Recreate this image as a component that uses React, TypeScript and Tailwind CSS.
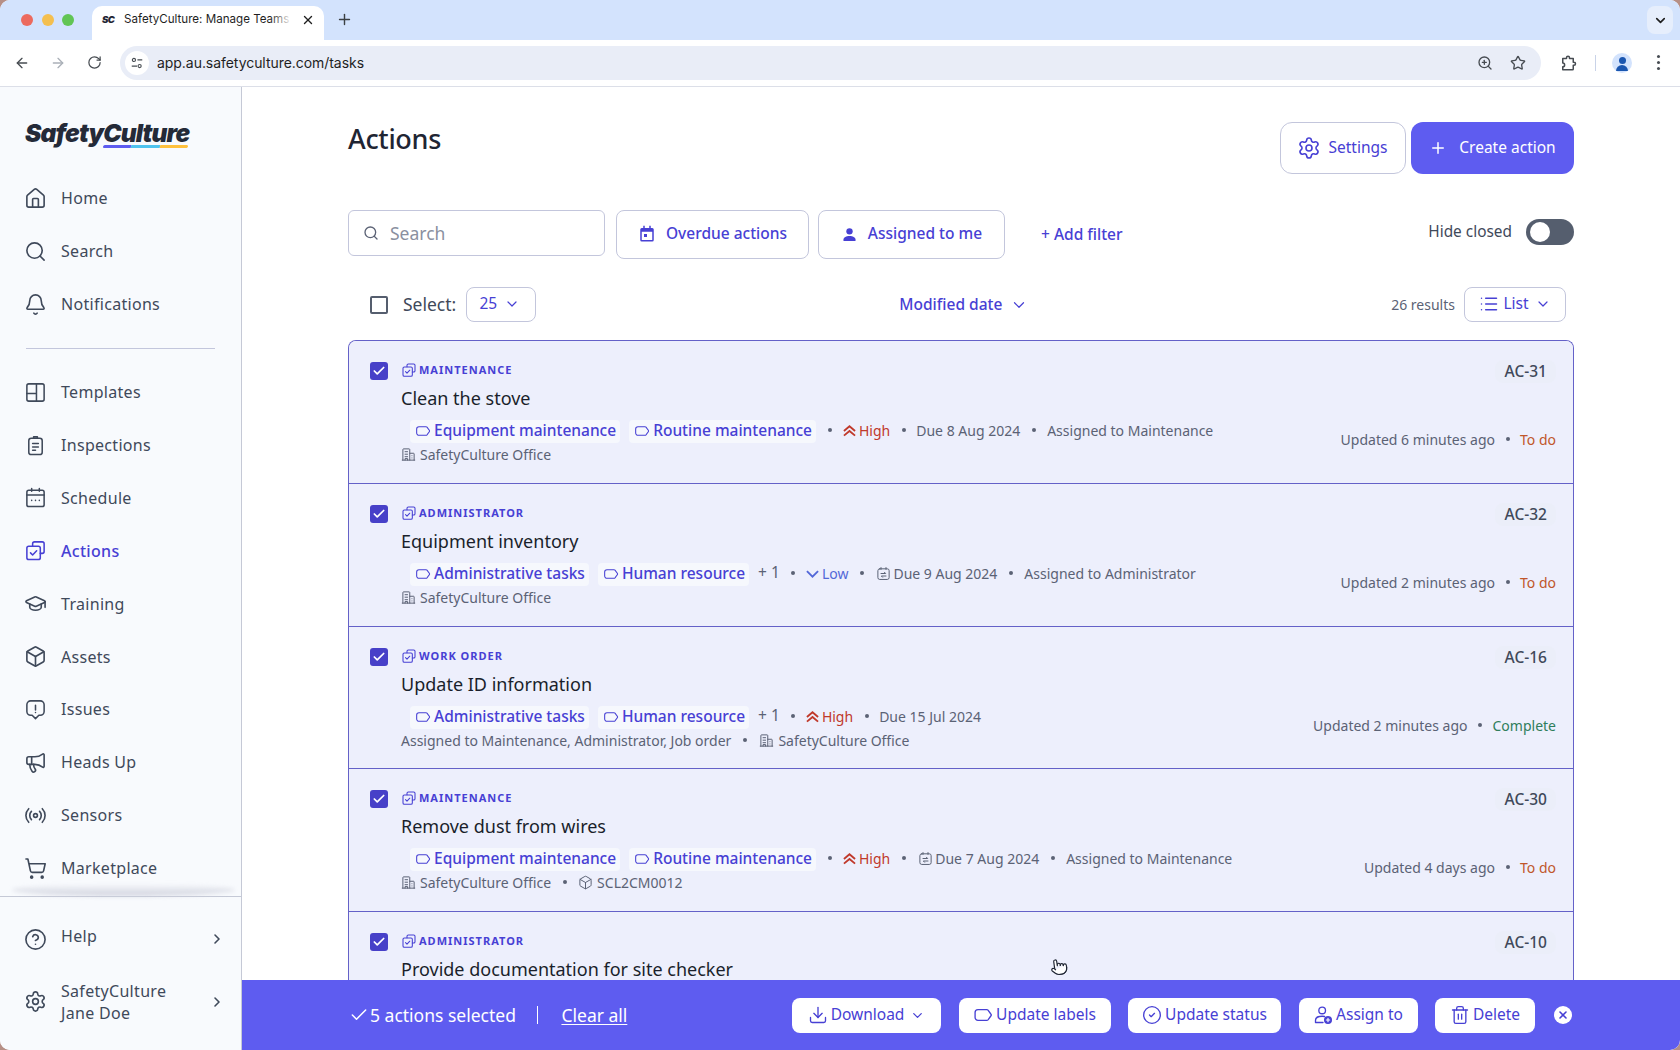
import React from "react";
import {
  ArrowLeft, ArrowRight, RotateCw, X, Plus, ChevronDown, ChevronRight, ZoomIn, Star, Search, House, Bell,
  GraduationCap, Box, Megaphone, Radio, ShoppingCart, CircleHelp, Settings, List, Download, CircleCheck,
  Trash2, Check, Pointer,
} from "lucide-react";

const S = ({ className, children }: { className?: string; children: React.ReactNode }) => (
  <svg viewBox="0 0 24 24" fill="none" stroke="currentColor" strokeWidth={1.6} strokeLinecap="round" strokeLinejoin="round" className={className}>
    {children}
  </svg>
);

const TemplatesIcon = ({ className }: { className?: string }) => (
  <S className={className}><rect x="3" y="3" width="18" height="18" rx="2" /><path d="M13 3v18M3 13h10" /></S>
);
const InspectionsIcon = ({ className }: { className?: string }) => (
  <S className={className}><rect x="5" y="4.5" width="14" height="17" rx="2.5" /><path d="M10 4.5V3h4v1.5M9 10h6M9 13.5h6M9 17h3" /></S>
);
const ScheduleIcon = ({ className }: { className?: string }) => (
  <S className={className}><rect x="3" y="4.5" width="18" height="17" rx="2" /><path d="M3 9.5h18M8 2.5v3M16 2.5v3M8 15h.01M12 15h.01M16 15h.01" /></S>
);
const ActionsIcon = ({ className }: { className?: string }) => (
  <S className={className}><path d="M9 7V5a2 2 0 0 1 2-2h8a2 2 0 0 1 2 2v8a2 2 0 0 1-2 2h-2" /><rect x="3" y="7.5" width="14" height="14" rx="2" /><path d="m6.8 14.5 2.2 2.2 4.2-4.4" /></S>
);
const IssuesIcon = ({ className }: { className?: string }) => (
  <S className={className}><path d="M7 3h10a4 4 0 0 1 4 4v7a4 4 0 0 1-4 4h-1.5L12 21.5 8.5 18H7a4 4 0 0 1-4-4V7a4 4 0 0 1 4-4z" /><path d="M12 7.5v5M12 15.2h.01" /></S>
);
const TagIcon = ({ className }: { className?: string }) => (
  <S className={className}><path d="M6 5.5h10.5a2 2 0 0 1 1.5.7l3.4 4.6a1.8 1.8 0 0 1 0 2.4L18 17.8a2 2 0 0 1-1.5.7H6a3.5 3.5 0 0 1-3.5-3.5V9A3.5 3.5 0 0 1 6 5.5z" /></S>
);
const BuildingIcon = ({ className }: { className?: string }) => (
  <S className={className}><path d="M3 21V4a1 1 0 0 1 1-1h9a1 1 0 0 1 1 1v17M14 10h6a1 1 0 0 1 1 1v10M2 21h20M6.5 7.5h4M6.5 11.5h4M6.5 15.5h4M6.5 21v-2.5h4V21M17.5 14v.01M17.5 17.5v.01" /></S>
);
const DueIcon = ({ className }: { className?: string }) => (
  <S className={className}><rect x="3" y="4.5" width="18" height="17" rx="3" /><path d="M8 2.5v3M16 2.5v3M8 12h7.5l-2-2M16 16H8.5l2 2" /></S>
);
const AssignIcon = ({ className }: { className?: string }) => (
  <S className={className}><circle cx="11" cy="6.500" r="4" /><path d="M3 21v-2.500c0-3 3.200-5 8-5 1 0 2 .1 2.800.3M3 21h9" /><circle cx="18" cy="18" r="4" fill="currentColor" /><path d="M18 16v4M16 18h4" stroke="#fff" strokeWidth={1.4} /></S>
);
const ExtensionIcon = ({ className }: { className?: string }) => (
  <svg viewBox="0 0 24 24" fill="none" stroke="currentColor" strokeWidth={2} strokeLinejoin="round" className={className}>
    <path d="M5 6h5V5a2 2 0 0 1 4 0v1h5v5h1a2 2 0 0 1 0 4h-1v5a1 1 0 0 1-1 1H5v-4c1.500 0 2.500-1 2.500-2.500S6.500 12 5 12z" />
  </svg>
);
const HighIcon = () => (
  <svg viewBox="0 0 14 14" className="w-[13px] h-[13px]" fill="none" stroke="currentColor" strokeWidth={2}>
    <path d="M1 7.500 7 2.500l6 5M1 12.500l6-5 6 5" />
  </svg>
);
const LowIcon = () => (
  <svg viewBox="0 0 14 14" className="w-[13px] h-[13px]" fill="none" stroke="currentColor" strokeWidth={2}>
    <path d="M1 4.500l6 6 6-6" />
  </svg>
);

const Dot = ({ className = "" }: { className?: string }) => (
  <span className={`w-[4px] h-[4px] rounded-full bg-[#5b6275] shrink-0 ${className}`} />
);

const navA: [string, any, boolean?][] = [
  ["Home", House],
  ["Search", Search],
  ["Notifications", Bell],
];
const navB: [string, any, boolean?][] = [
  ["Templates", TemplatesIcon],
  ["Inspections", InspectionsIcon],
  ["Schedule", ScheduleIcon],
  ["Actions", ActionsIcon, true],
  ["Training", GraduationCap],
  ["Assets", Box],
  ["Issues", IssuesIcon],
  ["Heads Up", Megaphone],
  ["Sensors", Radio],
  ["Marketplace", ShoppingCart],
];

const NavItem = ({ label, Icon, active }: { label: string; Icon: any; active?: boolean }) => (
  <div className={`h-[52.9px] flex items-center pl-[24px] ${active ? "text-[#4740d4] font-medium" : "text-[#3f495a]"}`}>
    <Icon className="w-[23px] h-[23px] shrink-0" strokeWidth={1.7} />
    <span className="ml-[14px] text-[16px] tracking-[0.3px]">{label}</span>
  </div>
);

function Chrome() {
  return (
    <>
      <div className="h-[40px] bg-[#d3e3fd] relative flex items-end shrink-0">
        <div className="flex items-center gap-[8.5px] pl-[21px] h-[40px] w-[92px] shrink-0">
          <span className="w-[12px] h-[12px] rounded-full bg-[#ec6a5e]" />
          <span className="w-[12px] h-[12px] rounded-full bg-[#f4bf4f]" />
          <span className="w-[12px] h-[12px] rounded-full bg-[#61c554]" />
        </div>
        <div className="w-[232px] h-[34px] bg-white rounded-t-[10px] flex items-center pl-[10px] pb-[6px] shrink-0 relative">
          <span className="text-[9.5px] font-black italic text-[#1f2533] w-[14px] font-['Inter',sans-serif] tracking-[-0.5px]">SC</span>
          <span className="ml-[8px] text-[11.6px] text-[#1f1f1f] font-['Inter',sans-serif] w-[168px] whitespace-nowrap">SafetyCulture: Manage Teams</span>
          <span className="absolute left-[178px] top-0 bottom-0 w-[22px] bg-gradient-to-r from-white/0 to-white" />
          <X className="w-[14px] h-[14px] ml-[9px] text-[#1f1f1f] relative" strokeWidth={2.4} />
        </div>
        <Plus className="w-[17px] h-[17px] ml-[12px] mb-[12px] text-[#3c4043]" strokeWidth={2} />
        <div className="ml-auto mr-[7px] mb-[6px] w-[26px] h-[28px] rounded-[8px] bg-[#e6eefc] flex items-center justify-center">
          <ChevronDown className="w-[15px] h-[15px] text-[#1f1f1f]" strokeWidth={2.6} />
        </div>
      </div>
      <div className="h-[47px] bg-white border-b border-[#dcdfe8] flex items-center shrink-0 pb-[1px]">
        <ArrowLeft className="w-[16px] h-[16px] ml-[14px] text-[#474c52]" strokeWidth={2} />
        <ArrowRight className="w-[16px] h-[16px] ml-[20px] text-[#aab0b8]" strokeWidth={2} />
        <RotateCw className="w-[15px] h-[15px] ml-[21px] text-[#474c52]" strokeWidth={2} />
        <div className="ml-[18px] w-[1421px] h-[34px] rounded-full bg-[#e9edf7] flex items-center pl-[5px] pr-[15px]">
          <span className="w-[24px] h-[24px] rounded-full bg-white flex items-center justify-center text-[#474c52]">
            <svg viewBox="0 0 16 16" className="w-[14px] h-[14px]" fill="none" stroke="currentColor" strokeWidth="1.3">
              <circle cx="4.500" cy="4.500" r="1.800" /><path d="M8.500 4.500H14M2 11.500h6" /><circle cx="11" cy="11.500" r="1.800" />
            </svg>
          </span>
          <span className="ml-[8px] text-[14px] text-[#1f1f1f] font-['Inter',sans-serif] tracking-[-0.05px]">app.au.safetyculture.com/tasks</span>
          <ZoomIn className="ml-auto w-[16px] h-[16px] text-[#474c52]" strokeWidth={2} />
          <Star className="ml-[17px] w-[16px] h-[16px] text-[#474c52]" strokeWidth={2} />
        </div>
        <ExtensionIcon className="ml-[18px] w-[18px] h-[18px] text-[#474c52]" />
        <span className="ml-[18px] w-[1px] h-[16px] bg-[#c9d3e8]" />
        <span className="ml-[16px] w-[20px] h-[20px] rounded-full bg-[#d3e3fd] overflow-hidden flex flex-col items-center justify-end">
          <span className="w-[7px] h-[7px] rounded-full bg-[#1a56b0] mb-[1px]" />
          <span className="w-[12px] h-[6px] rounded-t-full bg-[#1a56b0] mb-[2px]" />
        </span>
        <span className="ml-[19px] flex flex-col gap-[3px] items-center w-[14px]">
          <span className="w-[3px] h-[3px] rounded-full bg-[#474c52]" />
          <span className="w-[3px] h-[3px] rounded-full bg-[#474c52]" />
          <span className="w-[3px] h-[3px] rounded-full bg-[#474c52]" />
        </span>
      </div>
    </>
  );
}

function Sidebar() {
  return (
    <aside className="w-[242px] shrink-0 bg-[#f8fafd] border-r border-[#c5c9d6] flex flex-col">
      <div className="h-[85px] pl-[25px] pt-[31px] shrink-0">
        <div className="relative w-[170px]">
          <span className="block font-['Inter',sans-serif] italic font-black text-[#242a38] text-[24.5px] leading-[30px] tracking-[-0.85px]">SafetyCulture</span>
          <div className="absolute left-[78px] top-[27px] flex h-[3px] w-[85px] rounded-full overflow-hidden -skew-x-12">
            <span className="w-[28px] bg-[#5e5cf0]" />
            <span className="w-[29px] bg-[#4fc3ee]" />
            <span className="w-[28px] bg-[#ffc13d]" />
          </div>
        </div>
      </div>
      {navA.map(([l, I]) => <NavItem key={l} label={l} Icon={I} />)}
      <div className="mx-[26px] mt-[17px] mb-[17px] h-[1px] bg-[#c3c6dc] shrink-0" />
      {navB.map(([l, I, a]) => <NavItem key={l} label={l} Icon={I} active={a} />)}
      <div className="relative h-[1px] mt-[1.2px] bg-[#c5c9d6] shrink-0">
        <div className="absolute left-[12px] right-[6px] -top-[12px] h-[12px] rounded-[50%] bg-gradient-to-b from-transparent to-[#cfd1dd] blur-[2px]" />
      </div>
      <div className="h-[41px] mt-[22px] flex items-center pl-[24px] pr-[16px] text-[#3f495a]">
        <CircleHelp className="w-[23px] h-[23px]" strokeWidth={1.7} />
        <span className="ml-[14px] text-[16px] tracking-[0.3px] -mt-[6px]">Help</span>
        <ChevronRight className="ml-auto w-[16px] h-[16px]" strokeWidth={2.4} />
      </div>
      <div className="h-[44px] mt-[20px] flex items-center pl-[24px] pr-[16px] text-[#3f495a]">
        <Settings className="w-[23px] h-[23px]" strokeWidth={1.7} />
        <span className="ml-[14px] text-[16px] tracking-[0.3px] leading-[22px]">SafetyCulture<br />Jane Doe</span>
        <ChevronRight className="ml-auto w-[16px] h-[16px]" strokeWidth={2.4} />
      </div>
    </aside>
  );
}

type Meta = { priority: "High" | "Low"; due: string; dueIcon?: boolean; assigned?: string };
type RowData = {
  type: string; title: string; tags: string[]; more?: boolean; meta: Meta; second: React.ReactNode;
  id: string; updated: string; status: string; statusClass: string; h: string;
};

const Office = () => (
  <span className="flex items-center gap-[4px]">
    <BuildingIcon className="w-[15px] h-[15px]" />
    <span>SafetyCulture Office</span>
  </span>
);

const rows: RowData[] = [
  { type: "MAINTENANCE", title: "Clean the stove", tags: ["Equipment maintenance", "Routine maintenance"], id: "AC-31",
    meta: { priority: "High", due: "Due 8 Aug 2024", assigned: "Assigned to Maintenance" }, second: <Office />,
    updated: "Updated 6 minutes ago", status: "To do", statusClass: "text-[#c0562a]", h: "h-[143px]" },
  { type: "ADMINISTRATOR", title: "Equipment inventory", tags: ["Administrative tasks", "Human resource"], more: true, id: "AC-32",
    meta: { priority: "Low", due: "Due 9 Aug 2024", dueIcon: true, assigned: "Assigned to Administrator" }, second: <Office />,
    updated: "Updated 2 minutes ago", status: "To do", statusClass: "text-[#c0562a]", h: "h-[143px]" },
  { type: "WORK ORDER", title: "Update ID information", tags: ["Administrative tasks", "Human resource"], more: true, id: "AC-16",
    meta: { priority: "High", due: "Due 15 Jul 2024" },
    second: <><span>Assigned to Maintenance, Administrator, Job order</span><Dot className="mx-[12px]" /><Office /></>,
    updated: "Updated 2 minutes ago", status: "Complete", statusClass: "text-[#2f7d5b]", h: "h-[142px]" },
  { type: "MAINTENANCE", title: "Remove dust from wires", tags: ["Equipment maintenance", "Routine maintenance"], id: "AC-30",
    meta: { priority: "High", due: "Due 7 Aug 2024", dueIcon: true, assigned: "Assigned to Maintenance" },
    second: <><Office /><Dot className="mx-[11.5px]" /><span className="flex items-center gap-[4px]"><Box className="w-[15px] h-[15px]" strokeWidth={1.6} />SCL2CM0012</span></>,
    updated: "Updated 4 days ago", status: "To do", statusClass: "text-[#c0562a]", h: "h-[143px]" },
  { type: "ADMINISTRATOR", title: "Provide documentation for site checker", tags: [], id: "AC-10",
    meta: { priority: "High", due: "" }, second: null, updated: "", status: "", statusClass: "", h: "h-[143px]" },
];

const CheckBox = () => (
  <span className="w-[18px] h-[18px] rounded-[3px] bg-[#4740c8] flex items-center justify-center shrink-0">
    <Check className="w-[14px] h-[14px] text-white" strokeWidth={3} />
  </span>
);

function Row({ r, last }: { r: RowData; last?: boolean }) {
  const m = r.meta;
  return (
    <div className={`${r.h} shrink-0 bg-[#edeffc] flex pl-[21px] pr-[17px] pt-[21px] ${last ? "" : "border-b border-[#6461c8]"}`}>
      <CheckBox />
      <div className="ml-[13px] flex-1 min-w-0">
        <div className="h-[16px] flex items-center text-[#4740d4]">
          <ActionsIcon className="w-[16px] h-[16px]" />
          <span className="ml-[2px] text-[11px] font-bold tracking-[1px]">{r.type}</span>
        </div>
        <div className="mt-[7px] h-[26px] leading-[26px] text-[18px] text-[#1a1f2b]">{r.title}</div>
        {r.tags.length > 0 && (
          <div className="mt-[8px] h-[22px] flex items-center text-[14px] text-[#5b6275] pl-[9px]">
            {r.tags.map((t) => (
              <span key={t} className="h-[23px] mt-[2px] pl-[5px] pr-[4px] mr-[9px] rounded-[4px] bg-[#f6f8fd] flex items-center text-[#4740d4] text-[15.5px] font-medium whitespace-nowrap">
                <TagIcon className="w-[16px] h-[16px] mr-[3px]" />
                {t}
              </span>
            ))}
            {r.more && <span className="text-[15.5px] mr-[10px]">+ 1</span>}
            <Dot className={r.more ? "ml-[1px]" : "ml-[3px]"} />
            <span className={`ml-[11px] flex items-center ${m.priority === "High" ? "text-[#c0392b]" : "text-[#5368d8]"}`}>
              {m.priority === "High" ? <HighIcon /> : <LowIcon />}
              <span className="ml-[3px]">{m.priority}</span>
            </span>
            <Dot className="ml-[12px]" />
            {m.dueIcon ? <DueIcon className="w-[15px] h-[15px] ml-[12px] mr-[2px]" /> : <span className="w-[10px]" />}
            <span className="whitespace-nowrap">{m.due}</span>
            {m.assigned && <><Dot className="mx-[11.5px]" /><span className="whitespace-nowrap">{m.assigned}</span></>}
          </div>
        )}
        {r.second && <div className="mt-[3px] h-[20px] flex items-center text-[14px] text-[#5b6275] whitespace-nowrap">{r.second}</div>}
      </div>
      <div className="flex flex-col items-end shrink-0 -mt-[2px]">
        <span className="h-[23px] pl-[10px] pr-[9px] rounded-[8px] bg-[#ebeef9] flex items-center text-[15.5px] text-[#3f495a] font-medium">{r.id}</span>
        {r.updated && (
          <div className="mt-[46px] h-[20px] flex items-center text-[14px] text-[#5b6275]">
            <span>{r.updated}</span><Dot className="mx-[10.5px]" /><span className={r.statusClass}>{r.status}</span>
          </div>
        )}
      </div>
    </div>
  );
}

const BarBtn = ({ Icon, label, chevron, w }: { Icon: any; label: string; chevron?: boolean; w: string }) => (
  <button className={`${w} h-[35px] rounded-[8px] bg-white text-[#4740d4] flex items-center justify-center text-[15.5px] whitespace-nowrap`}>
    <Icon className="w-[20px] h-[20px] mr-[3px]" strokeWidth={1.6} />
    {label}
    {chevron && <ChevronDown className="w-[15px] h-[15px] ml-[6px]" strokeWidth={2} />}
  </button>
);

function Main() {
  return (
    <main className="flex-1 min-w-0 flex flex-col bg-white relative">
      <div className="flex-1 min-h-0 overflow-hidden px-[106px] pt-[35px]">
        <div className="flex items-start h-[52px]">
          <h1 className="text-[27px] leading-[34px] font-medium text-[#1f2533] tracking-[-0.3px]">Actions</h1>
          <button className="ml-auto w-[126px] h-[52px] pr-[2px] rounded-[12px] border border-[#c3c6dc] bg-white text-[#4740d4] flex items-center justify-center text-[15.5px]">
            <Settings className="w-[24px] h-[24px] mr-[8px]" strokeWidth={1.6} /> Settings
          </button>
          <button className="ml-[5px] w-[163px] h-[52px] rounded-[12px] bg-[#5e5cf0] text-white flex items-center justify-center text-[15.5px]">
            <Plus className="w-[18px] h-[18px] mr-[12px]" strokeWidth={2} /> Create action
          </button>
        </div>
        <div className="mt-[36px] flex items-start h-[49px]">
          <div className="w-[257px] h-[46px] rounded-[6px] border border-[#c3c6dc] flex items-center pl-[14px] text-[#8a90a0]">
            <Search className="w-[16px] h-[16px] text-[#5b6275]" strokeWidth={2} />
            <span className="ml-[11px] text-[17.5px]">Search</span>
          </div>
          <div className="ml-[11px] w-[193px] h-[49px] pb-[1px] rounded-[8px] border border-[#c3c6dc] flex items-center justify-center text-[#4740d4] text-[15.5px] font-medium">
            <svg viewBox="0 0 24 24" className="w-[18px] h-[18px] mr-[10px]" fill="currentColor"><path d="M7 1h2v3h6V1h2v3h2a2 2 0 0 1 2 2v14a2 2 0 0 1-2 2H5a2 2 0 0 1-2-2V6a2 2 0 0 1 2-2h2V1zM5 9v11h14V9H5zm3 3h4v4H8v-4z" /></svg>
            Overdue actions
          </div>
          <div className="ml-[9px] w-[187px] h-[49px] pb-[1px] rounded-[8px] border border-[#c3c6dc] flex items-center justify-center text-[#4740d4] text-[15.5px] font-medium">
            <svg viewBox="0 0 24 24" className="w-[17px] h-[17px] mr-[10px]" fill="currentColor"><circle cx="12" cy="7.500" r="4.500" /><path d="M3.500 21v-2c0-3.300 4-5 8.500-5s8.500 1.700 8.500 5v2h-17z" /></svg>
            Assigned to me
          </div>
          <span className="ml-[36px] h-[49px] flex items-center text-[#4740d4] text-[15.5px] font-medium">+ Add filter</span>
          <div className="ml-auto h-[44px] flex items-center">
            <span className="text-[15.4px] text-[#3f495a]">Hide closed</span>
            <span className="ml-[14px] w-[48px] h-[26px] rounded-full bg-[#555e6e] flex items-center pl-[4px]">
              <span className="w-[20px] h-[20px] rounded-full bg-white" />
            </span>
          </div>
        </div>
        <div className="mt-[28px] h-[35px] flex items-center pl-[22px] pr-[8px]">
          <span className="w-[18px] h-[18px] rounded-[2px] border-[2px] border-[#555e6e]" />
          <span className="ml-[15px] text-[17.5px] text-[#3f495a]">Select:</span>
          <span className="ml-[10px] w-[70px] h-[35px] pb-[1px] pr-[3px] rounded-[8px] border border-[#c3c6dc] flex items-center justify-center text-[#4740d4] text-[15.5px]">
            25<ChevronDown className="w-[16px] h-[16px] ml-[7px]" strokeWidth={1.8} />
          </span>
          <span className="ml-[363px] flex items-center text-[#4740d4] text-[15.5px] font-medium">
            Modified date<ChevronDown className="w-[18px] h-[18px] ml-[8px]" strokeWidth={1.6} />
          </span>
          <span className="ml-auto text-[14px] text-[#5b6275]">26 results</span>
          <span className="ml-[9px] w-[102px] h-[35px] pb-[1px] rounded-[8px] border border-[#c3c6dc] flex items-center justify-center text-[#4740d4] text-[15.5px]">
            <List className="w-[20px] h-[20px] mr-[4px]" strokeWidth={1.8} />List<ChevronDown className="w-[16px] h-[16px] ml-[6px]" strokeWidth={1.8} />
          </span>
        </div>
        <div className="mt-[18px] border border-b-0 border-[#6461c8] rounded-t-[8px] overflow-hidden">
          {rows.map((r, i) => <Row key={r.id} r={r} last={i === rows.length - 1} />)}
        </div>
      </div>
      <div className="h-[70px] shrink-0 bg-[#5e5cf0] flex items-center pl-[107px] pr-[108px] text-white">
        <Check className="w-[20px] h-[20px]" strokeWidth={1.8} />
        <span className="text-[17.5px] ml-[1px]">5 actions selected</span>
        <span className="ml-[21px] w-[1.5px] h-[18px] bg-white" />
        <span className="ml-[23px] text-[17.5px] underline underline-offset-2">Clear all</span>
        <div className="ml-auto flex items-center gap-[17.5px]">
          <BarBtn Icon={Download} label="Download" chevron w="w-[149px]" />
          <BarBtn Icon={TagIcon} label="Update labels" w="w-[152px]" />
          <BarBtn Icon={CircleCheck} label="Update status" w="w-[153px]" />
          <BarBtn Icon={AssignIcon} label="Assign to" w="w-[119px]" />
          <BarBtn Icon={Trash2} label="Delete" w="w-[100px]" />
        </div>
        <span className="ml-[19px] w-[18px] h-[18px] rounded-full bg-white flex items-center justify-center text-[#4740d4]">
          <X className="w-[12px] h-[12px]" strokeWidth={3.2} />
        </span>
      </div>
      <Pointer className="absolute left-[808px] top-[870px] w-[18px] h-[20px] text-[#1f2533] fill-white -rotate-[8deg]" strokeWidth={1.6} />
    </main>
  );
}

export default function App() {
  return (
    <div className="w-[1680px] h-[1050px] bg-[#b68f86] overflow-hidden font-['Noto_Sans',sans-serif]">
      <div className="w-full h-full rounded-[10px] overflow-hidden flex flex-col bg-white">
        <Chrome />
        <div className="flex-1 min-h-0 flex">
          <Sidebar />
          <Main />
        </div>
      </div>
    </div>
  );
}
